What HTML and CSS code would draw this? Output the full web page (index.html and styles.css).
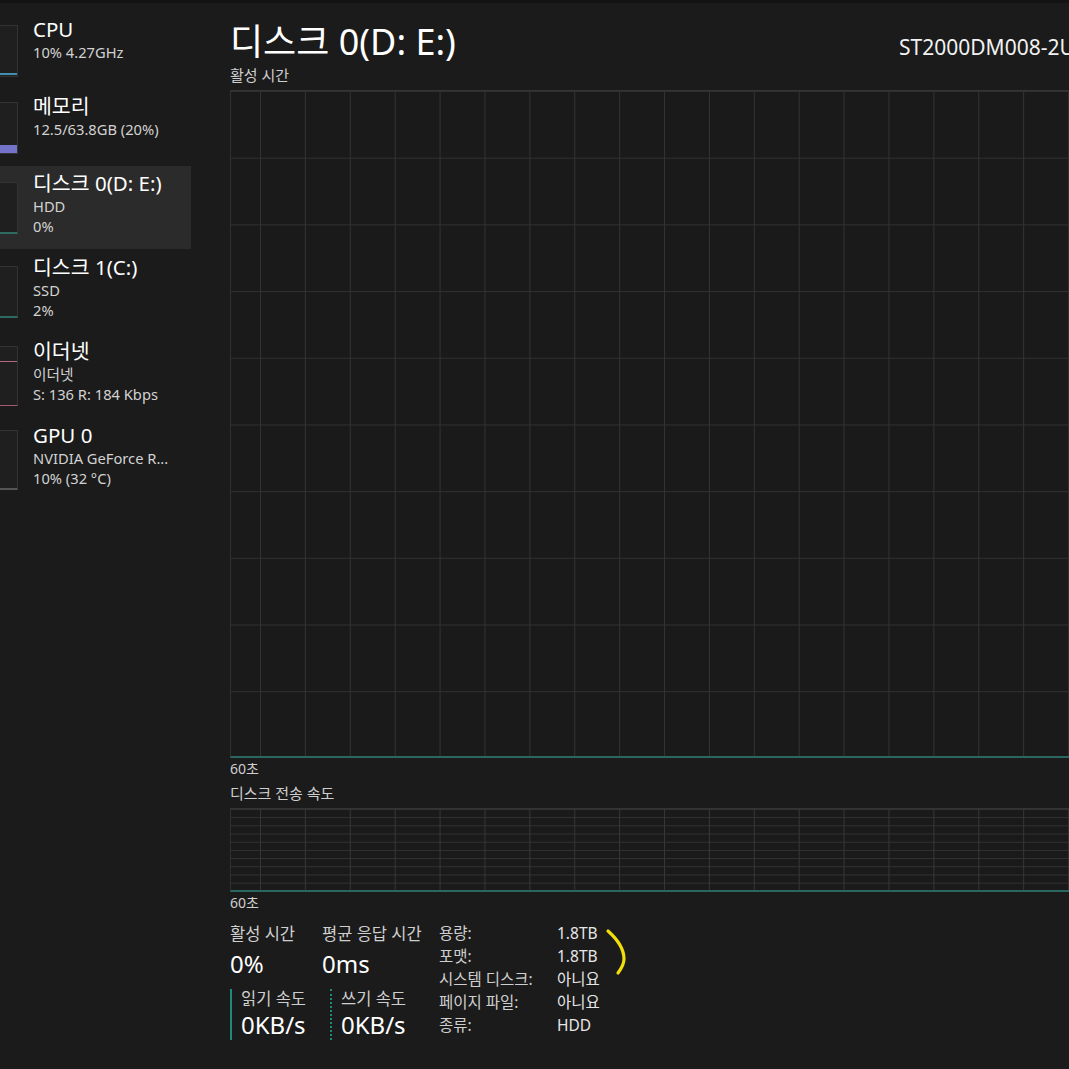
FILE: index.html
```html
<!DOCTYPE html>
<html lang="ko">
<head>
<meta charset="utf-8">
<title>작업 관리자 - 성능</title>
<link rel="stylesheet" href="styles.css">
</head>
<body>
<div class="topstrip"></div>
<div class="app">
  <nav class="sidebar">
    <div class="item short">
      <div class="thumb thumb-cpu"><span class="cpu-line"></span></div>
      <div class="info">
        <div class="name">CPU</div>
        <div class="sub">10% 4.27GHz</div>
      </div>
    </div>
    <div class="item short">
      <div class="thumb thumb-mem"><span class="mem-fill"></span></div>
      <div class="info">
        <div class="name">메모리</div>
        <div class="sub">12.5/63.8GB (20%)</div>
      </div>
    </div>
    <div class="item selected">
      <div class="thumb thumb-disk"></div>
      <div class="info">
        <div class="name">디스크 0(D: E:)</div>
        <div class="sub">HDD</div>
        <div class="sub">0%</div>
      </div>
    </div>
    <div class="item">
      <div class="thumb thumb-disk"></div>
      <div class="info">
        <div class="name">디스크 1(C:)</div>
        <div class="sub">SSD</div>
        <div class="sub">2%</div>
      </div>
    </div>
    <div class="item">
      <div class="thumb thumb-eth"><span class="eth-line"></span></div>
      <div class="info">
        <div class="name">이더넷</div>
        <div class="sub">이더넷</div>
        <div class="sub">S: 136 R: 184 Kbps</div>
      </div>
    </div>
    <div class="item">
      <div class="thumb thumb-gpu"></div>
      <div class="info">
        <div class="name">GPU 0</div>
        <div class="sub">NVIDIA GeForce R...</div>
        <div class="sub">10% (32 °C)</div>
      </div>
    </div>
  </nav>

  <main class="main">
    <header class="header">
      <h1 class="title">디스크 0(D: E:)</h1>
      <div class="model">ST2000DM008-2UB102</div>
    </header>

    <div class="chart-label">활성 시간</div>
    <div class="chart chart-big"></div>
    <div class="chart-foot">60초</div>

    <div class="chart-label second">디스크 전송 속도</div>
    <div class="chart chart-small"></div>
    <div class="chart-foot">60초</div>

    <section class="stats">
      <div class="stats-left">
        <div class="stat">
          <div class="stat-label">활성 시간</div>
          <div class="stat-value">0%</div>
        </div>
        <div class="stat">
          <div class="stat-label">평균 응답 시간</div>
          <div class="stat-value">0ms</div>
        </div>
        <div class="stat speed read">
          <div class="stat-label">읽기 속도</div>
          <div class="stat-value">0KB/s</div>
        </div>
        <div class="stat speed write">
          <div class="stat-label">쓰기 속도</div>
          <div class="stat-value">0KB/s</div>
        </div>
      </div>
      <dl class="props">
        <dt>용량:</dt><dd>1.8TB</dd>
        <dt>포맷:</dt><dd>1.8TB</dd>
        <dt>시스템 디스크:</dt><dd>아니요</dd>
        <dt>페이지 파일:</dt><dd>아니요</dd>
        <dt>종류:</dt><dd>HDD</dd>
      </dl>
      <svg class="scribble" width="30" height="50" viewBox="0 0 30 50">
        <path d="M3 3 C 12 11, 19 21, 19 31 C 19 37, 16 41, 13 45" fill="none" stroke="#f2de0a" stroke-width="3.2" stroke-linecap="round"/>
      </svg>
    </section>
  </main>
</div>
</body>
</html>
```

FILE: styles.css
```css
html, body {
  margin: 0;
  padding: 0;
}
body {
  width: 1069px;
  height: 1069px;
  overflow: hidden;
  background: #1b1b1b;
  color: #ffffff;
  font-family: "Noto Sans", "Noto Sans CJK KR", sans-serif;
  position: relative;
}
.topstrip {
  height: 3px;
  background: #131313;
}
.app {
  display: grid;
  grid-template-columns: 191px 878px;
  overflow: hidden;
}

/* Sidebar */
.sidebar {
  padding-top: 9px;
  display: flex;
  flex-direction: column;
}
.item {
  display: flex;
  align-items: center;
  height: 84px;
  box-sizing: border-box;
}
.item.short {
  height: 77px;
}
.item.selected {
  background: #2b2b2b;
  height: 83px;
  margin-bottom: 1px;
}
.thumb {
  width: 18px;
  height: 52px;
  background: #1f1f1f;
  border: 1px solid #333;
  border-left: none;
  box-sizing: border-box;
  position: relative;
  overflow: hidden;
  flex: none;
}
.thumb-cpu .cpu-line {
  position: absolute;
  left: 0;
  right: 0;
  bottom: 1px;
  height: 2px;
  background: #3f8fb0;
}
.thumb-mem .mem-fill {
  position: absolute;
  left: 0;
  right: 0;
  bottom: 0;
  height: 8px;
  background: #7373c9;
}
.thumb-disk {
  border-bottom: 2px solid #2f6a62;
}
.thumb-eth {
  height: 60px;
  border-bottom: 1px solid #a05a72;
}
.thumb-eth .eth-line {
  position: absolute;
  left: 0;
  right: 0;
  top: 14px;
  height: 1px;
  background: #b06a80;
}
.thumb-gpu {
  height: 60px;
  border-bottom: 2px solid #555;
}
.info {
  margin-left: 15px;
  align-self: flex-start;
  padding-top: 4px;
}
.name {
  font-size: 20.5px;
  line-height: 26px;
  color: #ffffff;
  white-space: nowrap;
}
.sub {
  font-size: 14.7px;
  line-height: 20px;
  color: #d2d2d2;
  white-space: nowrap;
}

/* Main */
.main {
  padding-left: 39px;
  padding-top: 19px;
  min-width: 0;
  overflow: hidden;
}
.header {
  display: grid;
  grid-template-columns: 669px 1fr;
  align-items: baseline;
}
.title {
  margin: 0;
  font-weight: normal;
  font-size: 36px;
  line-height: 40px;
  color: #ffffff;
  white-space: nowrap;
}
.model {
  font-size: 21px;
  color: #f2f2f2;
  white-space: nowrap;
}
.chart-label {
  font-size: 15px;
  line-height: 18px;
  color: #cfcfcf;
  margin-top: 4px;
}
.chart-label.second {
  margin-top: 6px;
}
.chart {
  margin-top: 6px;
  box-sizing: border-box;
  border-top: 1px solid #343434;
  border-left: 1px solid #303030;
  border-bottom: 2px solid #2c6660;
}
.chart-big {
  height: 668px;
  background-color: #1a1a1a;
  background-image:
    linear-gradient(to right, #333333 1px, transparent 1px),
    linear-gradient(to bottom, #303030 1px, transparent 1px);
  background-size: 44.9px 100%, 100% 66.7px;
  background-position: 29px 0, 0 0;
}
.chart-small {
  height: 84px;
  background-color: #1a1a1a;
  background-image:
    linear-gradient(to right, #363636 1px, transparent 1px),
    linear-gradient(to bottom, #333333 1px, transparent 1px);
  background-size: 44.9px 100%, 100% 8.2px;
  background-position: 29px 0, 0 0;
}
.chart-foot {
  font-size: 14px;
  line-height: 18px;
  color: #cfcfcf;
  margin-top: 2px;
}

/* Stats */
.stats {
  display: flex;
  margin-top: 12px;
  position: relative;
}
.stats-left {
  display: grid;
  grid-template-columns: 92px 117px;
  row-gap: 10px;
}
.stat-label {
  font-size: 16.5px;
  line-height: 20px;
  color: #cfcfcf;
  white-space: nowrap;
}
.stat-value {
  font-size: 24px;
  line-height: 30px;
  margin-top: 5px;
  color: #ffffff;
  white-space: nowrap;
}
.speed {
  padding-left: 9px;
}
.speed .stat-value {
  margin-top: 1px;
}
.read {
  border-left: 2px solid #21897c;
}
.write {
  border-left: 2px dotted #21897c;
  margin-left: 8px;
}
.props {
  margin: -2px 0 0 0;
  display: grid;
  grid-template-columns: 118px auto;
  font-size: 15.5px;
  line-height: 23px;
  align-content: start;
}
.props dt {
  color: #cfcfcf;
  white-space: nowrap;
}
.props dd {
  margin: 0;
  color: #e6e6e6;
  white-space: nowrap;
}
.scribble {
  position: absolute;
  left: 375px;
  top: 4px;
}
```
